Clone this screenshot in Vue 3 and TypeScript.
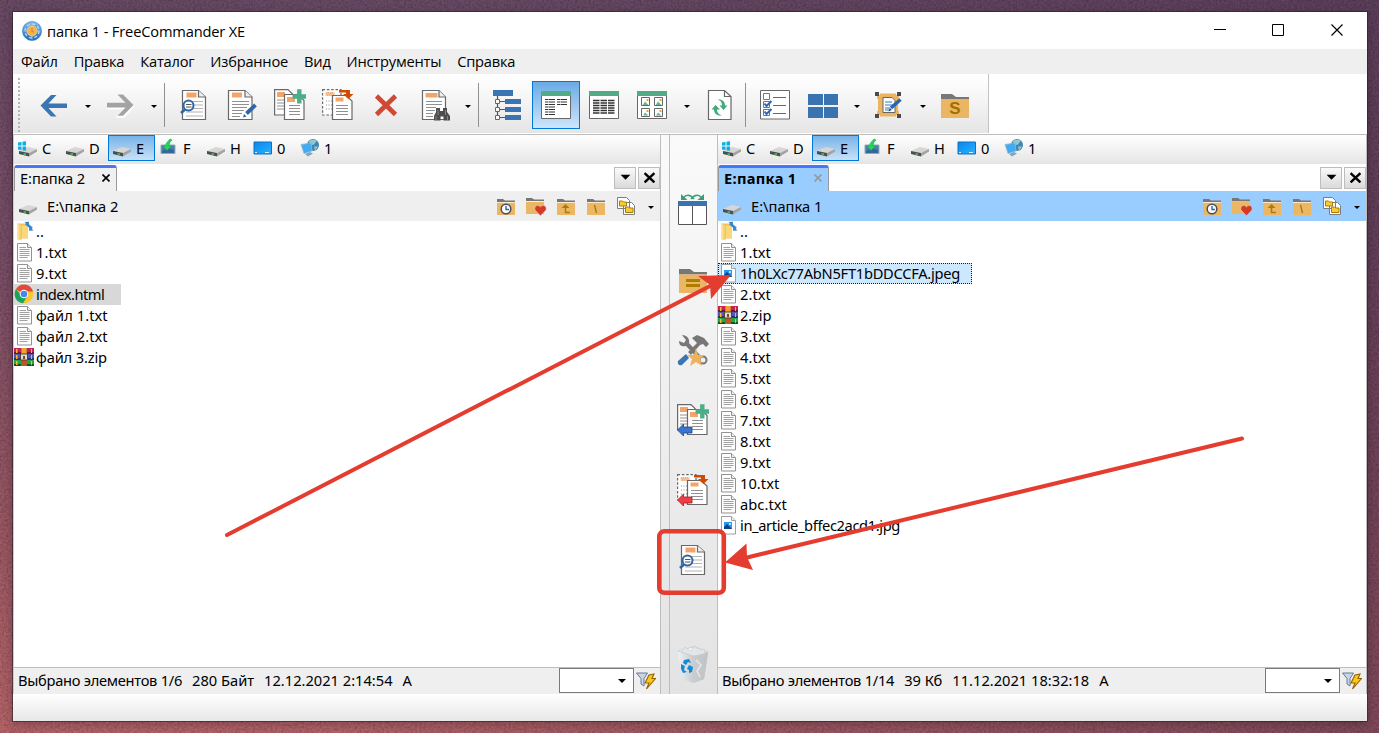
<script setup lang="ts">
interface Panel {
  side: string
  tab: string
  path: string
  status: string[]
  files: { name: string; icon: string; state?: string }[]
}

const menu = ['Файл', 'Правка', 'Каталог', 'Избранное', 'Вид', 'Инструменты', 'Справка']

const drives = [
  { label: 'C', icon: 'drive-win' },
  { label: 'D', icon: 'drive' },
  { label: 'E', icon: 'drive', active: true },
  { label: 'F', icon: 'usb' },
  { label: 'H', icon: 'drive' },
  { label: '0', icon: 'desktop' },
  { label: '1', icon: 'network' },
]

const tools = [
  'back', 'dd', 'forward', 'dd', 'sep', 'view', 'edit', 'copy', 'move', 'delete', 'find', 'dd', 'sep',
  'tree', 'brief', 'details', 'thumbs', 'dd wide', 'refresh', 'sep narrow', 'checklist', 'grid', 'dd',
  'select', 'dd', 'folder-s',
]
const isButton = (t: string) => !t.startsWith('dd') && !t.startsWith('sep')

const sideTools = ['swap', 'folder-eq', 'tools', 'copy-left', 'move-left', 'view']
const pathTools = ['history', 'favorite', 'up', 'root', 'folders']

const txt = (name: string) => ({ name, icon: 'txt' })

const panels: Panel[] = [
  {
    side: 'left',
    tab: 'E:папка 2',
    path: 'E:\\папка 2',
    status: ['Выбрано элементов 1/6', '280 Байт', '12.12.2021 2:14:54', 'A'],
    files: [
      { name: '..', icon: 'parent' },
      txt('1.txt'),
      txt('9.txt'),
      { name: 'index.html', icon: 'chrome', state: 'marked' },
      txt('файл 1.txt'),
      txt('файл 2.txt'),
      { name: 'файл 3.zip', icon: 'zip', state: 'archive' },
    ],
  },
  {
    side: 'right',
    tab: 'E:папка 1',
    path: 'E:\\папка 1',
    status: ['Выбрано элементов 1/14', '39 Кб', '11.12.2021 18:32:18', 'A'],
    files: [
      { name: '..', icon: 'parent' },
      txt('1.txt'),
      { name: '1h0LXc77AbN5FT1bDDCCFA.jpeg', icon: 'image', state: 'focused' },
      txt('2.txt'),
      { name: '2.zip', icon: 'zip', state: 'archive' },
      txt('3.txt'), txt('4.txt'), txt('5.txt'), txt('6.txt'), txt('7.txt'), txt('8.txt'), txt('9.txt'), txt('10.txt'), txt('abc.txt'),
      { name: 'in_article_bffec2acd1.jpg', icon: 'image', state: 'long' },
    ],
  },
]
</script>

<template>
  <div class="desktop">
    <svg class="defs" width="0" height="0">
      <defs>
        <linearGradient id="g-folder" x1="0" x2="1"><stop offset="0" stop-color="#ffe9a3" /><stop offset="1" stop-color="#f3c75c" /></linearGradient>
        <linearGradient id="g-app" x1="0" y1="0" x2="0" y2="1"><stop offset="0" stop-color="#7dbdf0" /><stop offset="1" stop-color="#1c68b8" /></linearGradient>
        <linearGradient id="g-screen" x1="0" y1="0" x2="1" y2="1"><stop offset="0" stop-color="#0a86ee" /><stop offset="1" stop-color="#27b2ff" /></linearGradient>
        <linearGradient id="g-bin" x1="0" x2="1"><stop offset="0" stop-color="#eef1f3" /><stop offset="1" stop-color="#a4a9ae" /></linearGradient>
      </defs>

      <symbol id="i-app" viewBox="0 0 20 20">
        <circle cx="10" cy="10" r="9.6" fill="url(#g-app)" stroke="#3a7dbd" stroke-width=".6" />
        <circle cx="10" cy="10" r="7" fill="none" stroke="#b9dcf6" stroke-width="1.3" stroke-dasharray="3 2.5" />
        <path d="M10 1.5v17M1.5 10h17" stroke="#8ec5f0" stroke-width="1" />
        <circle cx="10" cy="10" r="5" fill="#f5b04a" stroke="#ffd48a" stroke-width=".8" />
        <path d="M10 7v4M10 10l2 1.5" stroke="#c58a35" fill="none" />
      </symbol>

      <symbol id="i-back" viewBox="0 0 32 32"><path d="M2.5 16.500 13 6h5.500l-8 8.500H29v4.500H10.500l8 8.500H13z" fill="#3a76b4" /></symbol>
      <symbol id="i-forward" viewBox="0 0 32 32"><path d="M30 16.800 20 27.500h-6l8-8.200H3" fill="none" stroke="#fff" stroke-width="2" /><path d="M29.500 16 19 5.500h-5.500l8 8.200H3v4.700h18.500l-8 8.300H19z" fill="#a3a3a3" /></symbol>

      <symbol id="i-view" viewBox="0 0 32 32">
        <path d="M4.500 1.500h16l7 6.500v22.500h-23z" fill="#fff" stroke="#686868" stroke-width="1.200" />
        <path d="M20.500 1.500v6.500h7" fill="#eee" stroke="#686868" stroke-width="1.200" />
        <path d="M8.500 3.500h10v5h-10z" fill="#f4a468" />
        <path d="M12 12.500h13M14 16h11M14 19.500h11M8 23h17M8 27h17" stroke="#b4b4b4" stroke-width="1.200" />
        <circle cx="10.500" cy="16.500" r="5" fill="#fff" stroke="#2d66a8" stroke-width="2" />
        <path d="M8 15.500h5.500M8 18h5.500" stroke="#555" />
        <path d="M7 20.500 3 24" stroke="#2d66a8" stroke-width="2.600" />
      </symbol>
      <symbol id="i-edit" viewBox="0 0 32 32">
        <path d="M2.500 1.500h16.500l7 6.500v22.500H2.500z" fill="#fff" stroke="#686868" stroke-width="1.200" />
        <path d="M19 1.500v6.500h7" fill="#eee" stroke="#686868" stroke-width="1.200" />
        <path d="M6 3.500h10v5H6z" fill="#f4a468" />
        <path d="M6 12.500h17M6 15.500h17M6 18.500h15M6 21.500h12M6 24.500h10M6 27.500h8" stroke="#909090" stroke-width="1.200" />
        <path d="m20.500 24.500 9-8.500" stroke="#2d66a8" stroke-width="3.800" />
        <path d="m17 28.500 1-3.500 2.500 2.500z" fill="#2d66a8" />
      </symbol>
      <symbol id="i-copy" viewBox="0 0 32 32">
        <path d="M.6.600h13.400l6 6V26H.6z" fill="#fff" stroke="#686868" stroke-width="1.200" />
        <path d="M3 3h8v5H3z" fill="#f4a468" />
        <path d="M3 11h7M3 14h7M3 17h7M3 20h7" stroke="#909090" />
        <path d="M10.500 5.500H24l6 6v19H10.500z" fill="#fff" stroke="#686868" stroke-width="1.200" />
        <path d="M13 8h8v5h-8z" fill="#f4a468" />
        <path d="M15 16.500h11M15 19.500h11M15 22.500h11M15 25.500h11" stroke="#909090" stroke-width="1.200" />
        <path d="M18.500 5.300h4.600V.3h4.400v5H32v4.400h-4.500v4.800h-4.400V9.700h-4.600z" fill="#4bae87" />
      </symbol>
      <symbol id="i-move" viewBox="0 0 32 32">
        <path d="M.6.600H19V26H.6z" fill="#fff" stroke="#686868" stroke-width="1.200" stroke-dasharray="2.500 1.800" />
        <path d="M3.500 3h9v4h-9z" fill="#f8c8a2" /><path d="M4 4h8M5 6h7" stroke="#ef9a59" stroke-dasharray="1 1" />
        <path d="M4 12h6M4 16h6M4 20h6" stroke="#8c8c8c" stroke-dasharray="1 1.500" />
        <path d="M10.500 6.500H24l6 5.500v18.500H10.500z" fill="#fff" stroke="#686868" stroke-width="1.200" />
        <path d="M13.500 8.500h8v4h-8z" fill="#f4a468" />
        <path d="M14 16.500h12M14 19.500h12M14 22.500h12M14 25.500h12" stroke="#909090" stroke-width="1.200" />
        <path d="M17 1h11v4h3.500l-5.200 5-5.300-5h3V3.500h-7z" fill="#cf4b05" />
      </symbol>
      <symbol id="i-delete" viewBox="0 0 32 32"><path d="M6.500 7 25.500 25.500M25.500 7 6.500 25.500" stroke="#cf4a35" stroke-width="4.600" /></symbol>
      <symbol id="i-find" viewBox="0 0 32 32">
        <path d="M4.500 1.500h16.500l6.500 6.500v22.500h-23z" fill="#fff" stroke="#686868" stroke-width="1.200" />
        <path d="M21 1.500v6.500h6.500" fill="#eee" stroke="#686868" stroke-width="1.200" />
        <path d="M7.500 4h12v4.500h-12z" fill="#f4a468" />
        <path d="M8 12.500h16M8 15.500h16M8 18.500h10M8 21.500h9M8 24.500h7M8 27.500h7" stroke="#909090" stroke-width="1.200" />
        <path d="M18 19h4v3h3v-3h4v4l3 4v4.500h-6.500v-4h-3v4H16V27l2-4z" fill="#4d4d4d" />
        <path d="M18 27v4M29.500 27v4M20 21v5M27.500 21v5" stroke="#858585" />
      </symbol>
      <symbol id="i-tree" viewBox="0 0 32 32">
        <path d="M5.500 7v22M8 12.500h5M8 20.500h5M8 28.500h5" stroke="#555" stroke-width="1.200" />
        <path d="M1 1h20v6H1zM13 10h16v5H13zM13 18h16v5H13zM13 26h16v5H13z" fill="#3a74b2" />
        <path d="M3.500 10.500h4v4h-4zM3.500 18.500h4v4h-4zM3.500 26.500h4v4h-4z" fill="#fff" stroke="#666" />
      </symbol>
      <symbol id="i-brief" viewBox="0 0 32 32">
        <path d="M1.500 3h29v26.500h-29z" fill="#fff" stroke="#686868" /><path d="M1 2h30v5H1z" fill="#50ab86" />
        <path d="M5 10.500h10M5 13h10M5 15.500h10M5 18h10M5 20.500h10M5 23h10M5 25.500h10M17 10.500h10M17 13h10M17 15.500h10" stroke="#333" stroke-width="1.200" stroke-dasharray="3 .5 6.500" />
      </symbol>
      <symbol id="i-details" viewBox="0 0 32 32">
        <path d="M1.500 3h29v26.500h-29z" fill="#fff" stroke="#686868" /><path d="M1 2h30v5H1z" fill="#50ab86" />
        <path d="M5 11.500h22M5 14h22M5 16.500h22M5 19h22M5 21.500h22M5 24h22" stroke="#333" stroke-width="1.300" stroke-dasharray="6.500 1" />
      </symbol>
      <symbol id="i-thumbs" viewBox="0 0 32 32">
        <path d="M1.500 3h29v26.500h-29z" fill="#fff" stroke="#686868" /><path d="M1 2h30v5H1z" fill="#50ab86" />
        <path d="M5.500 8.500h8v8h-8zM18.500 8.500h8v8h-8zM5.500 19.500h8v8h-8zM18.500 19.500h8v8h-8z" fill="#fff" stroke="#666" />
        <path d="m7 15.500 2-3 3.500 3.500H7zM20 15.500l2-3 3.500 3.500H20zM7 26.500l2-3 3.500 3H7zM20 26.500l2-3 3.500 3H20z" fill="#62b899" />
        <path d="M10.500 10h2v2h-2zM23.500 10h2v2h-2zM10.500 21h2v2h-2zM23.500 21h2v2h-2z" fill="#efa042" />
      </symbol>
      <symbol id="i-refresh" viewBox="0 0 32 32">
        <path d="M4.500 1.500h16l6.500 6v23H4.500z" fill="#fff" stroke="#686868" stroke-width="1.200" /><path d="M20.500 1.500v6H27" fill="none" stroke="#686868" stroke-width="1.200" />
        <path d="M13.500 10.500c5-.5 7.500 2 7.500 6h2.500l-4 4.500-4-4.500H18c0-3-1-5-4.500-6z" fill="#40ab7d" />
        <path d="M18 26.500c-5 .5-8-2-8-6H7.500l4-4.500 4.500 4.500h-3c0 3 1.500 5 5 6z" fill="#40ab7d" />
      </symbol>
      <symbol id="i-checklist" viewBox="0 0 32 32">
        <path d="M1.500 1.500h29v28.500h-29z" fill="#fff" stroke="#686868" />
        <path d="M4.500 4.500h6v6h-6zM4.500 12.500h6v6h-6zM4.500 20.500h6v6h-6z" fill="#fff" stroke="#777" />
        <path d="M14 8.500h13M14 16.500h13M14 24.500h13" stroke="#686868" stroke-width="1.200" />
        <path d="m5.500 14.500 2 2.500 5-5M5.500 22.500l2 2.500 5-5" fill="none" stroke="#2d66b0" stroke-width="2" />
      </symbol>
      <symbol id="i-grid" viewBox="0 0 32 32"><path d="M1 5h15v11H1zM17 5h14v11H17zM1 18h15v11H1zM17 18h14v11H17z" fill="#3974b1" /></symbol>
      <symbol id="i-select" viewBox="0 0 32 32">
        <path d="M4 6h3V4.500h16V6h3v4h-1v12h1v4h-3v1.500H7V26H4v-4h1V10H4z" fill="#ebb462" />
        <path d="M2 3h4v4H2zM24 3h4v4h-4zM2 25h4v4H2zM24 25h4v4h-4z" fill="#4a4a4a" />
        <path d="M10 8.500h9l3 3v12H10z" fill="#fff" stroke="#666" /><path d="M12 13h7M12 16h8M12 19h5M12 21h5" stroke="#3a76b4" />
        <path d="m18 19 9.500-8.500" stroke="#2868b0" stroke-width="3.500" /><path d="m15.500 22.500 1.300-3.500 2 2z" fill="#174b88" />
      </symbol>
      <symbol id="i-folder-s" viewBox="0 0 32 32">
        <path d="M2 5h11l4 3h13v2.500H2z" fill="#777" /><path d="M2 10.500h28V29H2z" fill="#ebb663" />
      </symbol>

      <symbol id="i-swap" viewBox="0 0 32 32">
        <path d="M1.500 8h28v22.500h-28zM15.500 10v21" fill="#fff" stroke="#555" /><path d="M1 7h29v5H1z" fill="#3973b2" />
        <path d="M6 4c3-3.500 7-4 11 1M25 4c-3-3.500-7-4-11 1" fill="none" stroke="#35a077" stroke-width="1.500" />
        <path d="M4 0v6h6.500zM27 0v6h-6.500z" fill="#35a077" />
      </symbol>
      <symbol id="i-folder-eq" viewBox="0 0 32 32">
        <path d="M2 5h11l4 3h13v2.500H2z" fill="#777" /><path d="M2 10.500h28V29H2z" fill="#ebb663" /><path d="M9 15h14v3H9zM9 20h14v3H9z" fill="#b07d00" />
      </symbol>
      <symbol id="i-tools" viewBox="0 0 32 32">
        <path d="M2 7c0 5 4 6 7 5l12 13 5 5c4-1 4-4 2-6l-5-3L12 9c1-4-2-8-7-8l4 5-2 3z" fill="#777" />
        <circle cx="26" cy="26" r="3.500" fill="#eee" stroke="#777" stroke-width="2" />
        <path d="m15 4 5-3 7 3 5 6-3 3-3-3-3 1-9 10-3-3 9-9z" fill="#777" /><path d="m1 27 8-7 3 4-7 7c-3 1-5-1-4-4z" fill="#3a76b4" />
        <path d="m19 14 2 7h7l-5 4 2 7-6-4-6 4 2-7-5-4h7z" fill="#efb15b" />
      </symbol>
      <symbol id="i-copy-left" viewBox="0 0 32 32"><use href="#i-copy" width="32" height="32" /><path d="m.5 26 6-6v3H15v6H6.500v3z" fill="#3b73d1" stroke="#204485" stroke-width=".8" /></symbol>
      <symbol id="i-move-left" viewBox="0 0 32 32"><use href="#i-move" width="32" height="32" /><path d="m.5 26 6-6v3H15v6H6.500v3z" fill="#ef3e48" stroke="#a51d25" stroke-width=".8" /></symbol>
      <symbol id="i-bin" viewBox="0 0 32 38">
        <path d="M1 6 17 1l14 6-4 27-11 4-11-4z" fill="url(#g-bin)" /><path d="m1 6 15 5 15-4-14-5z" fill="#f8fafb" stroke="#c7cdd1" stroke-width=".7" />
        <path d="m4 7 4-5 5 4 5-5 4 5 5-2 1 5-11 2z" fill="#e2e6e8" stroke="#bcc3c7" stroke-width=".5" /><path d="m16 11 1 27 10-4 4-27z" fill="#cacdd0" opacity=".7" />
        <path d="M19 15l5 5-4 6 3 6" fill="none" stroke="#e5e7e9" stroke-width="1.500" />
        <path d="m7 15 5-1 2 4-3-1-2 3-3-2zM4 19l4 2-1 4 3 2-4 1-2-4zM12 20l4 2-1 5-3 1v-3l-2-1z" fill="#138bd8" />
      </symbol>

      <symbol id="i-drive" viewBox="0 0 20 20">
        <path d="m1 13 9-4 9 2-8 4z" fill="#d6d6d6" /><path d="m1 13 10 2v3.500L1 16z" fill="#4e4e4e" /><path d="m11 15 8-4v2.500l-8 5z" fill="#a3a3a3" /><path d="M5.500 15.300h2.500v1.500H5.500z" fill="#38d255" />
      </symbol>
      <symbol id="i-drive-win" viewBox="0 0 20 20"><use href="#i-drive" width="20" height="20" /><path d="M0 4.500 3.500 4v3.500H0zM4.500 3.800 8 3.300v4.200H4.500zM0 8.500h3.500V12L0 11.500zM4.500 8.500H8v4.300l-3.500-.5z" fill="#08adea" /></symbol>
      <symbol id="i-usb" viewBox="0 0 20 20"><path d="M2 7h14v8.500H2z" fill="#4b7fab" stroke="#91a9bb" /><path d="m3 13 6-3 6 2v3H3z" fill="#3565a0" /><path d="M11 1 7.500 5l-1 3H4l4 4.500L12.500 8H10c0-2.500 1-4.500 3-6z" fill="#27d45d" stroke="#1aab43" stroke-width=".6" /></symbol>
      <symbol id="i-desktop" viewBox="0 0 20 20"><path d="M1 4h17.500v12H1z" fill="url(#g-screen)" stroke="#0873c4" /><path d="M2 14.500h2M12 14.500h4" stroke="#d7f0ff" /></symbol>
      <symbol id="i-network" viewBox="0 0 20 20"><circle cx="13" cy="7" r="6" fill="#3f87ae" /><path d="M9 3.500c3-3 6-1 8-1l-3 4-4 1zM14 8.500h4l-3 4z" fill="#94c5d2" /><path d="m1 6.500 10-1.500 1 8-8 2.500z" fill="#42aaf0" stroke="#8fb9d3" stroke-width=".8" /><path d="m5 16 5-2 3 1.500-5 3z" fill="#7fa8c0" /></symbol>

      <symbol id="i-folder" viewBox="0 0 20 20"><path d="M1 3h6l2 1.500h10V6H1z" fill="#777" /><path d="M1 6h18v1H1z" fill="#f7e8cf" /><path d="M1 7h18v12H1z" fill="#ebb765" /></symbol>
      <symbol id="i-history" viewBox="0 0 20 20"><use href="#i-folder" width="20" height="20" /><circle cx="10" cy="13" r="4.800" fill="#fff" stroke="#4c4c5c" stroke-width="1.500" /><path d="M10 10v3.500h3" fill="none" stroke="#31669a" stroke-width="1.400" /></symbol>
      <symbol id="i-favorite" viewBox="0 0 22 20"><path d="M0 2h6l2 1.500h10V5H0z" fill="#777" /><path d="M0 6h18v12H0z" fill="#ebb765" /><path d="M14.500 19.800 9 14c-1-4 3-6 5.500-3 2.500-3 6.500-1 5.500 3z" fill="#d13b27" stroke="#f1d2bd" stroke-width=".5" /></symbol>
      <symbol id="i-up" viewBox="0 0 20 20"><use href="#i-folder" width="20" height="20" /><path d="M9.500 17v-7M9 16.500h5" stroke="#b07c00" stroke-width="1.500" /><path d="m5.500 12 4-4 4 4z" fill="#b07c00" /></symbol>
      <symbol id="i-root" viewBox="0 0 20 20"><use href="#i-folder" width="20" height="20" /><path d="m8.500 9 2 8" stroke="#a97800" stroke-width="1.300" /></symbol>
      <symbol id="i-folders" viewBox="0 0 20 20"><path d="M1.500 1.500h9l3 3v8h-12zM7.500 6.500h8l3 3v9h-11z" fill="#fff" stroke="#7d7d7d" /><path d="M3.500 5h3l1 1h3v4h-7zM9.500 11h3l1 1h3.500v4.500H9.500z" fill="#f9cb2d" stroke="#a77a13" /></symbol>

      <symbol id="i-parent" viewBox="0 0 20 21"><path d="M3 2.500h11v15H6l-3 1z" fill="#edc45a" /><path d="m3 2.500 4.500 2V19.500L3 18z" fill="url(#g-folder)" /><path d="M8 4.500h6v12.500H8z" fill="#f9d77a" /><path d="m12 2.500 6 5" stroke="#3b89c9" stroke-width="2.500" fill="none" /><path d="M10.500 1 15 .7l-.3 4.500zM19.500 9.500l-4.500.3.300-4.600z" fill="#3386cd" /></symbol>
      <symbol id="i-txt" viewBox="0 0 20 21"><path d="M3.500 1.500h10l4 4v13.500h-14z" fill="#fcfcfc" stroke="#929292" /><path d="M13.500 1.500v4h4" fill="#eee" stroke="#929292" /><path d="M5.500 5.500h6.500M5.500 7.500h10M5.500 9.500h10M5.500 11.500h10M5.500 13.500h10M5.500 15.500h8" stroke="#a2a2a2" /></symbol>
      <symbol id="i-image" viewBox="0 0 20 21"><path d="M3.500 1.500h10l4 4v13.500h-14z" fill="#fff" stroke="#a0a0a0" /><path d="M13.500 1.500v4h4" fill="#eee" stroke="#a0a0a0" /><path d="M6 7h8v7H6z" fill="#2599ed" /><path d="m6 12 3-3 5 5H6z" fill="#183f86" /><path d="M11 8h2v2h-2z" fill="#9cecff" /></symbol>
      <symbol id="i-zip" viewBox="0 0 20 21"><path d="M0 1h20v6H0z" fill="#c42354" /><path d="M0 5h20v2H0z" fill="#741334" /><path d="M0 7h20v6H0z" fill="#5356b3" /><path d="M0 11h20v2H0z" fill="#30316d" /><path d="M0 13h20v6H0z" fill="#22a447" /><path d="M0 17h20v2H0z" fill="#0e5722" /><path d="M2 2h1.500v4H2zM2 8h1.500v4H2zM2 14h1.500v4H2zM17 2h1v4h-1zM17 8h1v4h-1zM17 14h1v4h-1z" fill="#f5bb33" /><path d="M7 1h6v18H7z" fill="#b65b20" /><path d="M7.500 1h5v6h-5z" fill="#efa232" /><path d="M6.500 7h7v6h-7z" fill="#ddd" stroke="#57432f" /><path d="M9 9h2v3H9z" fill="#744b29" /></symbol>
      <symbol id="i-chrome" viewBox="0 0 20 21"><circle cx="10" cy="10" r="9.300" fill="#f9c72d" /><path d="M10 10 1.900 5.300a9.300 9.300 0 0 1 16.200 0L19 7.500h-9z" fill="#df4b3c" /><path d="M1.900 5.300A9.300 9.300 0 0 0 9 19.300l4.500-7.300H8z" fill="#1aa35c" /><circle cx="10" cy="10" r="4.300" fill="#fff" /><circle cx="10" cy="10" r="3.300" fill="#4388ee" /></symbol>
      <symbol id="i-filter" viewBox="0 0 20 20"><path d="M.5 2h11L8 7.500V15l-3-2V7.500z" fill="#c9d5e5" stroke="#667b96" /><path d="m13 4 5-1-2 4.500h3.500L10.500 18l2.500-6h-4z" fill="#fbc817" stroke="#966200" stroke-width="1.100" /></symbol>
    </svg>

    <svg class="grain" width="1379" height="733">
      <filter id="noise"><feTurbulence type="fractalNoise" baseFrequency=".45" numOctaves="2" seed="4" /><feColorMatrix values="0 0 0 0 0  0 0 0 0 0  0 0 0 0 0  .8 0 0 0 -.25" /></filter>
      <rect width="1379" height="733" filter="url(#noise)" />
    </svg>

    <main class="window">
      <header class="title">
        <svg class="app-icon"><use href="#i-app" /></svg>
        <span class="title-text">папка 1 - FreeCommander XE</span>
        <svg class="win-buttons" viewBox="0 0 144 20" fill="none" stroke="#000">
          <path d="M0 9.500h12" /><path d="M58.500 4.500h11v11h-11z" /><path d="m117.500 4.500 11 11M128.500 4.500l-11 11" stroke-width="1.200" />
        </svg>
      </header>
      <nav class="menu"><span v-for="m in menu" :key="m">{{ m }}</span></nav>

      <div class="toolbar-row">
        <div class="toolbar">
          <i class="grip"></i>
          <template v-for="(t, i) in tools" :key="i">
            <span v-if="isButton(t)" :class="['tool', t, { on: t === 'brief' }]"><svg><use :href="'#i-' + t" /></svg><b v-if="t === 'folder-s'">S</b></span>
            <i v-else :class="t"></i>
          </template>
        </div>
      </div>

      <div class="body">
        <template v-for="p in panels" :key="p.side">
          <section :class="['panel', p.side]">
            <div class="drives">
              <span v-for="d in drives" :key="d.label" :class="['drive', { on: d.active }]"><svg><use :href="'#i-' + d.icon" /></svg>{{ d.label }}</span>
            </div>
            <div class="tabs">
              <div class="tab"><span>{{ p.tab }}</span><svg viewBox="0 0 8 8"><path d="m.5.500 7 7m0-7-7 7" fill="none" stroke="currentColor" stroke-width="1.600" /></svg></div>
              <span class="mini"><svg viewBox="0 0 10 10"><path d="M.5 2.500h9L5 7z" /></svg></span>
              <span class="mini"><svg viewBox="0 0 10 10"><path d="m.5 1 9 8.500m0-8.500-9 8.500" stroke="#000" stroke-width="2.200" /></svg></span>
            </div>
            <div class="path">
              <svg class="path-drive"><use href="#i-drive" /></svg>
              <span class="path-text">{{ p.path }}</span>
              <svg v-for="t in pathTools" :key="t" :class="['path-tool', t]"><use :href="'#i-' + t" /></svg>
              <i class="path-dd"></i>
            </div>
            <ul class="files">
              <li v-for="f in p.files" :key="f.name" :class="f.state"><svg><use :href="'#i-' + f.icon" /></svg><span>{{ f.name }}</span></li>
            </ul>
            <footer class="status">
              <span v-for="s in p.status" :key="s">{{ s }}</span>
              <b class="combo"></b>
              <svg><use href="#i-filter" /></svg>
            </footer>
          </section>
          <aside v-if="p.side === 'left'" class="side">
            <div class="side-tools">
              <svg v-for="t in sideTools" :key="t"><use :href="'#i-' + t" /></svg>
              <svg class="bin"><use href="#i-bin" /></svg>
            </div>
          </aside>
        </template>
      </div>
      <div class="bottom"></div>
    </main>

    <svg class="marks" width="1379" height="733">
      <g fill="none" stroke="#e53c30" stroke-width="4" stroke-linecap="round">
        <path d="M227 535 712 285" /><path d="M1242 438.500 745 558" />
        <rect x="659.300" y="531.300" width="64.500" height="61.500" rx="5" stroke-width="4.600" />
      </g>
      <path d="m731 275-20 24-1-14-12-9zM725 562.500l21.500-19L747 557l6 13z" fill="#e53c30" />
    </svg>
  </div>
</template>

<style>
body { margin: 0; overflow: hidden; }
</style>

<style scoped>
.desktop { position: relative; box-sizing: border-box; width: 1379px; height: 733px; padding: 12px 12px 12px 13px; overflow: hidden; font: 14.67px/20px "Noto Sans", "Open Sans", sans-serif; color: #000; background: linear-gradient(100deg, transparent 30%, rgba(80, 50, 80, .5)), linear-gradient(#6a4b66, #7a4f68 35%, #9b5965 70%, #b8666a); }
.defs { position: absolute; }
svg { display: block; flex: none; }
.grain, .marks { position: absolute; left: 0; top: 0; pointer-events: none; }
.grain { opacity: .5; }
.window { position: relative; display: flex; flex-direction: column; width: 1354px; height: 709px; background: #fff; box-shadow: 0 0 0 1px rgba(45, 30, 43, .6), 0 3px 9px 1px rgba(25, 10, 25, .25); }
.title { display: flex; align-items: center; height: 37px; padding-left: 9px; }
.app-icon { width: 20px; height: 20px; }
.title-text { margin-left: 5px; font-family: "Open Sans", sans-serif; letter-spacing: -.17px; }
.win-buttons { width: 144px; height: 20px; margin: -1px 9px 0 auto; }
.menu { display: flex; gap: 16px; height: 25px; padding-left: 8px; line-height: 25px; font-family: "Open Sans", sans-serif; letter-spacing: -.22px; background: #efefef; }
.toolbar-row { height: 60px; border-bottom: 1px solid #bdbdbd; }
.toolbar { display: flex; align-items: center; box-sizing: border-box; width: 976px; height: 59px; padding: 3px 0 0 1px; border-right: 1px solid #c3c3c3; background: linear-gradient(#fff, #fbfbfb 20%, #e5e5e5); }
.toolbar-row { height: 60px; }
.grip { width: 2px; height: 54px; margin: 0 10px 0 4px; background: repeating-linear-gradient(#b4b4b4 0 2px, transparent 2px 4px); }
.tool { display: grid; place-items: center; box-sizing: border-box; width: 48px; height: 48px; flex: none; }
.tool > * { grid-area: 1 / 1; }
.tool svg { width: 32px; height: 32px; }
.tool b { margin-top: 7px; font: 700 17px/18px "Liberation Sans", sans-serif; color: #a06f00; }
.tool.on { border: 1px solid #0078d7; background: linear-gradient(#69abe6, #cfe5fb); }
.dd { display: grid; width: 18px; padding-left: 7px; box-sizing: border-box; flex: none; }
.dd::before, .path-dd::before { content: ""; width: 0; border: 3px solid transparent; border-top: 3px solid #000; border-bottom: 0; }
.dd::before { margin-top: 2px; }
.dd.wide { width: 20px; padding-left: 8px; }
.sep { width: 8px; height: 44px; flex: none; background: linear-gradient(#909090, #909090) 2px 0 / 1px 100% no-repeat; }
.sep.narrow { width: 7px; background-position: 1px 0; }
.toolbar-row { box-sizing: border-box; height: 61px; }
.body { display: flex; height: 559px; }
.panel { display: flex; flex-direction: column; box-sizing: border-box; height: 559px; }
.left { width: 648px; border-left: 1px solid #ccc; border-right: 1px solid #bdbdbd; }
.right { width: 650px; border-left: 1px solid #bdbdbd; border-right: 1px solid #bdbdbd; }
.drives { display: flex; height: 29px; background: linear-gradient(#fff, #e5e5e5); }
.drive { display: flex; align-items: center; gap: 4px; box-sizing: border-box; width: 47px; height: 26px; padding: 0 0 0 3px; border: 1px solid transparent; }
.drive.on { border-color: #0078d7; background: linear-gradient(#78b3e8, #c9e1f9); }
.drive svg { width: 20px; height: 20px; }
.tabs { display: flex; height: 27px; align-items: center; }
.tab { display: flex; align-items: center; align-self: flex-end; box-sizing: border-box; width: 103px; height: 26px; margin-right: auto; padding: 0 6px 3px 5px; border: 1px solid #999; border-bottom: 0; border-top: 3px solid #4777f5; border-radius: 3px 3px 0 0; background: #f0f0f0; letter-spacing: -.1px; }
.tab svg { width: 8px; height: 8px; margin-left: auto; }
.right .tab { width: 111px; font-weight: 700; background: #99ccff; letter-spacing: .3px; }
.right .tab svg { color: #999; }
.mini { display: grid; place-items: center; box-sizing: border-box; width: 22px; height: 22px; margin-left: 2px; border: 1px solid #bdbdbd; background: linear-gradient(#fafafa, #dadada); }
.mini svg { width: 11px; height: 11px; }
.path { display: flex; align-items: center; height: 30px; padding-left: 4px; background: #efefef; }
.right .path { background: #99ccff; }
.path-drive { width: 20px; height: 20px; }
.path-text { margin: 0 auto 0 9px; }
.path-tool { width: 20px; height: 20px; margin-right: 10px; }
.path-tool.favorite { width: 22px; margin-right: 8px; }
.path-dd { display: grid; width: 6px; margin: 3px 6px 0 2px; }
.files { flex: 1; margin: 0; padding: 0; list-style: none; letter-spacing: .05px; }
.files li { display: flex; align-items: center; width: max-content; height: 21px; padding-right: 12px; }
.files svg { width: 20px; height: 21px; }
.files span { margin: -2px 0 0 2px; }
.files .archive { letter-spacing: -.15px; }
.files .marked { box-sizing: border-box; width: 107px; background: #d8d8d8; letter-spacing: -.5px; }
.files .focused { box-sizing: border-box; width: 254px; background: #cce8ff; outline: 1px dotted #222; outline-offset: -1px; letter-spacing: -.27px; }
.files .long { letter-spacing: -.38px; }
.status { display: flex; align-items: center; gap: 10px; height: 26px; padding-left: 4px; border-top: 1px solid #bdbdbd; background: #efefef; }
.status span { margin-top: -2px; }
.status span:first-child { letter-spacing: -.28px; }
.combo { display: grid; align-items: center; justify-content: end; box-sizing: border-box; width: 75px; height: 25px; margin: -1px 0 0 auto; padding-right: 7px; border: 1px solid #7a7a7a; background: #fff; }
.combo::before { content: ""; border: 4px solid transparent; border-top-color: #000; border-bottom: 0; }
.status svg { width: 20px; height: 20px; margin: 0 4px 0 -8px; }
.side { display: flex; justify-content: flex-end; box-sizing: border-box; width: 56px; background: linear-gradient(#fafafa, #e3e3e3); }
.side-tools { display: flex; flex-direction: column; gap: 38px; box-sizing: border-box; width: 48px; padding: 59px 0 0 7px; border-left: 1px solid #bdbdbd; }
.side-tools svg { width: 32px; height: 32px; }
.side-tools .bin { height: 38px; margin-top: 31px; }
.bottom { height: 27px; background: linear-gradient(#fff, #e7e7e7); }
</style>
